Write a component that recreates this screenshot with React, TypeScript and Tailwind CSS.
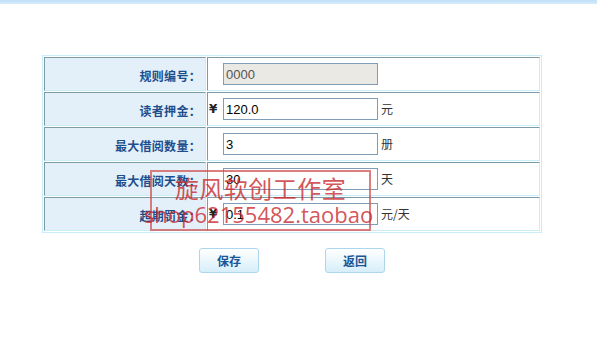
import React from "react";

const rows = [
  { label: "规则编号：", value: "0000", disabled: true, yen: false, unit: "" },
  { label: "读者押金：", value: "120.0", disabled: false, yen: true, unit: "元" },
  { label: "最大借阅数量：", value: "3", disabled: false, yen: false, unit: "册" },
  { label: "最大借阅天数：", value: "30", disabled: false, yen: false, unit: "天" },
  { label: "超期罚金：", value: "0.1", disabled: false, yen: true, unit: "元/天" },
];

const cjk = "font-['Noto_Sans_CJK_SC',sans-serif]";

export default function App() {
  return (
    <div className="relative w-[597px] h-[356px] bg-white overflow-hidden font-['Liberation_Sans','Noto_Sans_CJK_SC',sans-serif]">
      <div className="h-[4px] bg-gradient-to-b from-[#bfe0f6] to-[#d6ecfa]" />
      <table className="ml-[42px] mt-[51px] w-[500px] border border-[#c8eef8] border-separate border-spacing-[1px]">
        <tbody>
          {rows.map((r) => (
            <tr key={r.label}>
              <td className="w-[162px] h-[34px] p-0 pt-[3px] pr-[4px] bg-[#e3f0fa] border border-t-[#7f9aa7] border-l-[#7f9aa7] border-b-[#c8eef8] border-r-[#c8eef8] text-right align-middle text-[12px] font-bold text-[#1e4e8c] tracking-[0.3px] font-['Noto_Sans_CJK_SC',sans-serif]">
                {r.label}
              </td>
              <td className="h-[34px] p-0 pl-[1px] bg-white border border-t-[#7f9aa7] border-l-[#7f9aa7] border-b-[#c8eef8] border-r-[#c8eef8] align-middle">
                <div className="flex items-center">
                  <span className="w-[14px] text-[12px] font-bold text-[#222] leading-none font-['DejaVu_Sans',sans-serif]">{r.yen ? "¥" : ""}</span>
                  <input
                    readOnly
                    disabled={r.disabled}
                    value={r.value}
                    className={
                      r.disabled
                        ? "w-[155px] h-[22px] border border-[#7f9db9] px-[2px] text-[13px] outline-none bg-[#ebe9e3] text-[#555] font-['Liberation_Sans',sans-serif]"
                        : "w-[155px] h-[22px] border border-[#7f9db9] px-[2px] text-[13px] outline-none bg-white text-black font-['Liberation_Sans',sans-serif]"
                    }
                  />
                  <span className={`ml-[3px] text-[12px] text-[#333] ${cjk}`}>{r.unit}</span>
                </div>
              </td>
            </tr>
          ))}
        </tbody>
      </table>
      <div className="flex ml-[199px] mt-[15px] gap-[66px]">
        <button className="w-[60px] h-[25px] rounded-[3px] border border-[#acd6ee] bg-gradient-to-b from-white to-[#d6eefa] text-[12px] font-bold text-[#1a5598] font-['Noto_Sans_CJK_SC',sans-serif]">保存</button>
        <button className="w-[60px] h-[25px] rounded-[3px] border border-[#acd6ee] bg-gradient-to-b from-white to-[#d6eefa] text-[12px] font-bold text-[#1a5598] font-['Noto_Sans_CJK_SC',sans-serif]">返回</button>
      </div>
      <div className="absolute left-[150px] top-[170px] w-[221px] h-[61px] border-2 border-[#d04848]/70 pointer-events-none flex flex-col items-center">
        <div className="text-[24px] leading-[27px] mt-[2px] text-[#c8282d]/80 tracking-[0.5px] font-['Noto_Sans_CJK_SC',sans-serif]">旋风软创工作室</div>
        <div className="text-[22px] leading-[26px] text-[#c8282d]/80 -ml-[4px] font-['Open_Sans',sans-serif]">shop62155482.taobao</div>
      </div>
    </div>
  );
}
